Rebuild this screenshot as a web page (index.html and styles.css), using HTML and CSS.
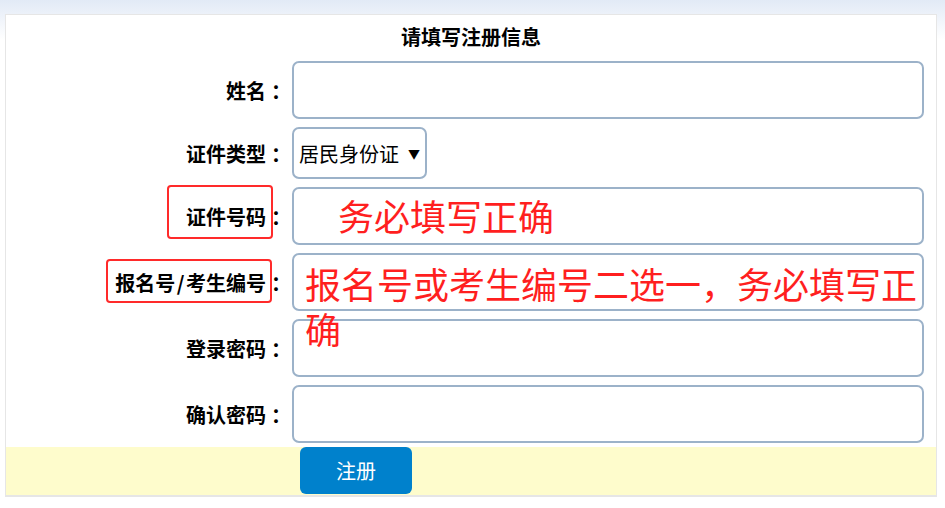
FILE: index.html
```html
<!DOCTYPE html>
<html lang="zh-CN">
<head>
    <meta charset="UTF-8">
    <meta name="viewport" content="width=device-width, initial-scale=1.0">
    <title>注册</title>
    <link rel="stylesheet" href="styles.css">
</head>
<body>
    <div class="panel">
        <div class="title">请填写注册信息</div>
        <div class="form">
            <label class="label">姓名<span class="colon">：</span></label>
            <div class="field"><input class="input" type="text"></div>

            <label class="label">证件类型<span class="colon">：</span></label>
            <div class="field">
                <div class="select"><span>居民身份证</span><span class="arrow">▼</span></div>
            </div>

            <label class="label">证件号码<span class="colon">：</span></label>
            <div class="field"><input class="input" type="text"></div>

            <label class="label">报名号 / 考生编号<span class="colon">：</span></label>
            <div class="field"><input class="input" type="text"></div>

            <label class="label">登录密码<span class="colon">：</span></label>
            <div class="field"><input class="input" type="password"></div>

            <label class="label">确认密码<span class="colon">：</span></label>
            <div class="field"><input class="input" type="password"></div>
        </div>
        <div class="actions">
            <button class="submit">注册</button>
        </div>

        <!-- annotations drawn over the form -->
        <div class="mark mark-id"></div>
        <div class="mark mark-exam"></div>
        <div class="note note-id">务必填写正确</div>
        <div class="note note-exam">报名号或考生编号二选一，务必填写正确</div>
    </div>
</body>
</html>
```

FILE: styles.css
```css
body {
    margin: 0;
    padding: 14px 0 0 5px;
    background: linear-gradient(#e2eaf6, #ffffff 40px) no-repeat;
    background-color: #fff;
    font-family: "Noto Sans CJK SC", "Noto Sans", sans-serif;
    color: #000;
}
.panel {
    position: relative;
    width: 930px;
    border: 1px solid #e6e6e6;
    border-bottom-width: 2px;
    background-color: #fff;
}
.title {
    height: 46px;
    padding-top: 8px;
    box-sizing: border-box;
    line-height: 28px;
    text-align: center;
    font-size: 20px;
    font-weight: bold;
}
.form {
    display: grid;
    grid-template-columns: 286px 632px;
    row-gap: 8px;
}
.label {
    display: flex;
    align-items: center;
    justify-content: flex-end;
    font-size: 20px;
    font-weight: bold;
    white-space: nowrap;
    word-spacing: -3px;
}
.colon {
    padding: 0 1px 0 5px;
}
.field {
    display: flex;
    align-items: center;
}
.input {
    width: 100%;
    height: 58px;
    box-sizing: border-box;
    border: 2px solid #9cb2c9;
    border-radius: 7px;
    background-color: #fff;
    outline: none;
}
.select {
    display: flex;
    align-items: center;
    gap: 9px;
    width: 135px;
    height: 52px;
    box-sizing: border-box;
    padding: 0 4px 0 5px;
    border: 2px solid #9cb2c9;
    border-radius: 7px;
    font-size: 20px;
    white-space: nowrap;
}
.select .arrow {
    font-size: 12px;
}
.actions {
    margin-top: 4px;
    height: 48px;
    padding-left: 294px;
    background-color: #fefccc;
}
.submit {
    width: 112px;
    height: 47px;
    border: none;
    border-radius: 6px;
    background-color: #0081cc;
    color: #fff;
    font-family: inherit;
    font-size: 20px;
}
.mark {
    position: absolute;
    border: 2px solid #ff2a2a;
    border-radius: 4px;
    box-sizing: border-box;
}
.mark-id {
    left: 161px;
    top: 170px;
    width: 106px;
    height: 54px;
}
.mark-exam {
    left: 100px;
    top: 244px;
    width: 166px;
    height: 44px;
}
.note {
    position: absolute;
    color: #ff1f1f;
    font-size: 36px;
    line-height: 45px;
}
.note-id {
    left: 332px;
    top: 178px;
}
.note-exam {
    left: 299px;
    top: 246px;
    width: 620px;
}
```
